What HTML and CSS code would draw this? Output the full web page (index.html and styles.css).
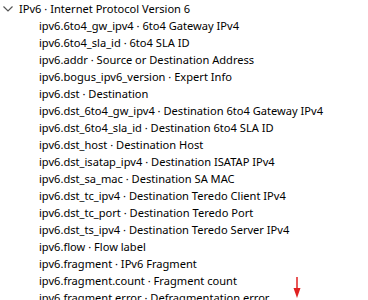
FILE: index.html
```html
<!DOCTYPE html>
<html lang="en">
<head>
    <meta charset="UTF-8">
    <title>Display Filter Fields</title>
    <link rel="stylesheet" href="styles.css">
</head>
<body>
    <div class="tree">
        <div class="row parent">
            <svg class="chevron" width="10" height="6" viewBox="0 0 10 6"><path d="M0.5 0.5 L5 5 L9.5 0.5" fill="none" stroke="#555" stroke-width="1.2"/></svg>
            <span>IPv6 · Internet Protocol Version 6</span>
        </div>
        <div class="children">
            <div class="row">ipv6.6to4_gw_ipv4 · 6to4 Gateway IPv4</div>
            <div class="row">ipv6.6to4_sla_id · 6to4 SLA ID</div>
            <div class="row">ipv6.addr · Source or Destination Address</div>
            <div class="row">ipv6.bogus_ipv6_version · Expert Info</div>
            <div class="row">ipv6.dst · Destination</div>
            <div class="row">ipv6.dst_6to4_gw_ipv4 · Destination 6to4 Gateway IPv4</div>
            <div class="row">ipv6.dst_6to4_sla_id · Destination 6to4 SLA ID</div>
            <div class="row">ipv6.dst_host · Destination Host</div>
            <div class="row">ipv6.dst_isatap_ipv4 · Destination ISATAP IPv4</div>
            <div class="row">ipv6.dst_sa_mac · Destination SA MAC</div>
            <div class="row">ipv6.dst_tc_ipv4 · Destination Teredo Client IPv4</div>
            <div class="row">ipv6.dst_tc_port · Destination Teredo Port</div>
            <div class="row">ipv6.dst_ts_ipv4 · Destination Teredo Server IPv4</div>
            <div class="row">ipv6.flow · Flow label</div>
            <div class="row">ipv6.fragment · IPv6 Fragment</div>
            <div class="row">ipv6.fragment.count · Fragment count</div>
            <div class="row">ipv6.fragment.error · Defragmentation error</div>
        </div>
    </div>
    <svg class="arrow" width="10" height="22" viewBox="0 0 10 22"><path d="M5 0 L5 12" stroke="#e02020" stroke-width="1.5"/><path d="M1.5 11 L8.5 11 L5 21 Z" fill="#e02020"/></svg>
</body>
</html>
```

FILE: styles.css
```css
body {
    margin: 0;
    background: #fff;
    color: #000;
    font-family: "Noto Sans", "Open Sans", sans-serif;
    font-size: 11.1px;
    overflow: hidden;
}
.row {
    height: 17px;
    line-height: 17px;
    white-space: nowrap;
}
.parent {
    display: flex;
    align-items: center;
}
.chevron {
    margin-left: 3px;
    margin-right: 6px;
}
.children {
    padding-left: 39px;
}
.arrow {
    position: absolute;
    left: 292px;
    top: 277px;
}
```
